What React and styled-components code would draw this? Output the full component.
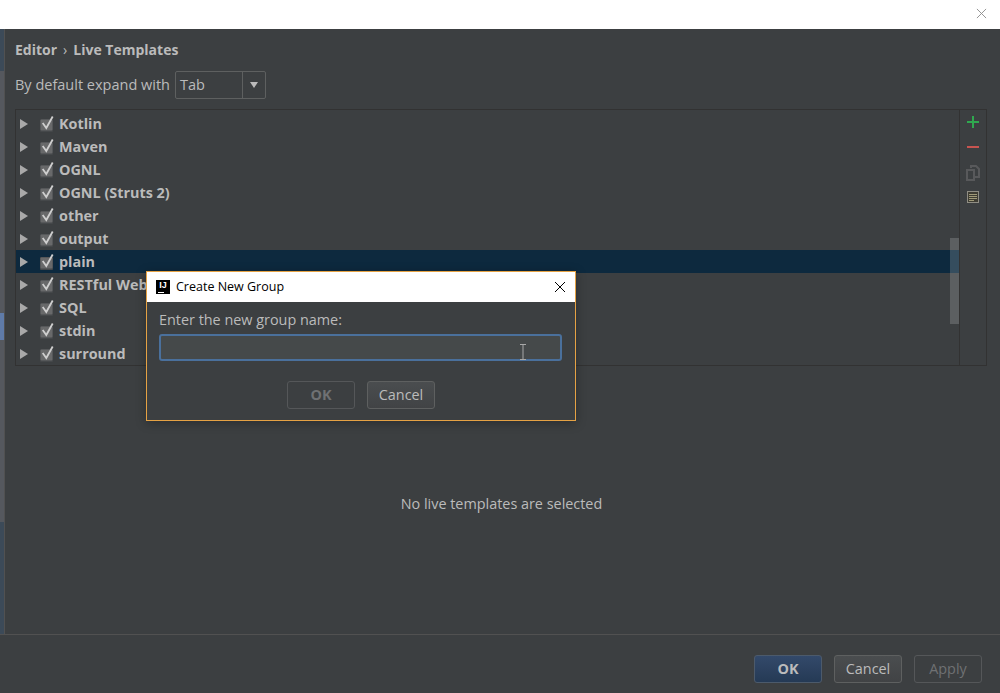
import styled, { createGlobalStyle } from "styled-components";

const groups = [
  "Kotlin",
  "Maven",
  "OGNL",
  "OGNL (Struts 2)",
  "other",
  "output",
  "plain",
  "RESTful Web Services",
  "SQL",
  "stdin",
  "surround",
];

const sideParts = [
  { h: 42, color: "#3c4a58" },
  { h: 242, color: "#55585e" },
  { h: 27, color: "#5f7ba8" },
  { h: 182, color: "#55585e" },
  { h: 112, color: "#3c4a58" },
];

const GlobalStyle = createGlobalStyle`
  html, body {
    margin: 0;
    height: 100%;
    overflow: hidden;
    background: #3c3f41;
  }
  body {
    font-family: "Open Sans", "Noto Sans", sans-serif;
  }
`;

const Page = styled.div`
  position: relative;
  width: 1000px;
  height: 693px;
  display: flex;
  flex-direction: column;
  color: #bbbbbb;
  background: #3c3f41;
`;

const TitleBar = styled.div`
  height: 29px;
  flex: none;
  box-sizing: border-box;
  background: #fff;
  display: flex;
  justify-content: flex-end;
  align-items: center;
  padding: 0 13px 3px 0;
`;

const Body = styled.div`
  flex: 1;
  display: flex;
  min-height: 0;
`;

const Sidebar = styled.div`
  width: 4px;
  flex: none;
  border-right: 1px solid #515151;
  display: flex;
  flex-direction: column;
`;

const SidePart = styled.div`
  height: ${(p) => p.$h}px;
  flex: none;
  background: ${(p) => p.$color};
`;

const Content = styled.div`
  flex: 1;
  padding: 10px 13px 0 10px;
`;

const Crumbs = styled.div`
  height: 21px;
  font-size: 14px;
  font-weight: 700;
  line-height: 21px;
  display: flex;
  gap: 6px;
`;

const CrumbSep = styled.span`
  font-weight: 400;
`;

const ExpandRow = styled.div`
  display: flex;
  align-items: center;
  gap: 5px;
  margin-top: 11px;
  height: 28px;
  font-size: 14.5px;
`;

const ExpandLabel = styled.span`
  padding-bottom: 2px;
`;

const Combo = styled.div`
  width: 91px;
  height: 28px;
  box-sizing: border-box;
  border: 1px solid #5e6060;
  border-radius: 2px;
  display: flex;
  align-items: center;
`;

const ComboValue = styled.div`
  flex: 1;
  padding: 0 0 2px 4px;
`;

const ComboArrow = styled.div`
  width: 22px;
  height: 100%;
  border-left: 1px solid #5e6060;
  display: flex;
  align-items: center;
  justify-content: center;

  &::after {
    content: "";
    border: 4px solid transparent;
    border-top: 6px solid #bbbbbb;
    border-bottom: 0;
  }
`;

const TemplatesPanel = styled.div`
  margin-top: 10px;
  height: 257px;
  box-sizing: border-box;
  border: 1px solid #323232;
  display: flex;
`;

const TreeWrap = styled.div`
  position: relative;
  flex: 1;
  padding-top: 2px;
  border-right: 1px solid #323232;
`;

const TreeRow = styled.div`
  height: 23px;
  display: flex;
  align-items: center;
  background: ${(p) => (p.$selected ? "#0d293e" : "transparent")};
  font-size: 14.4px;
  font-weight: 700;
  white-space: nowrap;
`;

const TreeLabel = styled.span`
  padding-bottom: 1px;
`;

const Arrow = styled.span`
  margin-left: 4px;
  border: 5px solid transparent;
  border-left: 8px solid #a9a9a9;
  border-right: 0;
`;

const Check = styled.svg`
  margin-left: 12px;
  margin-right: 5px;
  flex: none;
`;

const ScrollThumb = styled.div`
  position: absolute;
  top: 128px;
  right: 0;
  width: 9px;
  height: 86px;
  background: rgba(255, 255, 255, 0.17);
`;

const ActionBar = styled.div`
  width: 26px;
  display: flex;
  flex-direction: column;
  align-items: center;
  padding-top: 5px;
  gap: 10px;
`;

const Placeholder = styled.div`
  text-align: center;
  margin-top: 128px;
  padding-left: 1px;
  font-size: 14.4px;
  line-height: 20px;
`;

const Footer = styled.div`
  height: 59px;
  flex: none;
  box-sizing: border-box;
  border-top: 1px solid #515151;
  display: flex;
  justify-content: flex-end;
  align-items: flex-start;
  gap: 12px;
  padding: 20px 18px 0 0;
`;

const Btn = styled.div`
  width: ${(p) => p.$w || 68}px;
  height: 28px;
  box-sizing: border-box;
  padding-bottom: 2px;
  border-radius: 3px;
  font-size: 14.4px;
  display: flex;
  align-items: center;
  justify-content: center;
  border: 1px solid ${(p) => (p.$primary ? "#4c5a6b" : p.$disabled ? "#555759" : "#5e6060")};
  color: ${(p) => (p.$disabled ? "#6f7173" : "#bbbbbb")};
  font-weight: ${(p) => (p.$primary || p.$bold ? 700 : 400)};
  background: ${(p) =>
    p.$primary
      ? "linear-gradient(#33496a, #253a55)"
      : p.$disabled
        ? "transparent"
        : "linear-gradient(#4a4d4f, #414345)"};
`;

const Dialog = styled.div`
  position: absolute;
  left: 146px;
  top: 271px;
  width: 430px;
  height: 150px;
  box-sizing: border-box;
  border: 1px solid #e5a244;
  background: #3c3f41;
  box-shadow: 0 2px 10px rgba(0, 0, 0, 0.3);
  display: flex;
  flex-direction: column;
`;

const DialogTitle = styled.div`
  height: 30px;
  flex: none;
  box-sizing: border-box;
  background: #fff;
  color: #000;
  display: flex;
  align-items: center;
  font-size: 12.5px;
  padding: 0 9px 1px;
  gap: 6px;
`;

const Logo = styled.div`
  width: 14px;
  height: 14px;
  flex: none;
  background: #000;
  color: #fff;
  font: 700 9px/10px "Liberation Sans", sans-serif;
  text-align: center;
  position: relative;

  &::after {
    content: "";
    position: absolute;
    left: 2px;
    bottom: 1px;
    width: 6px;
    height: 1px;
    background: #fff;
  }
`;

const DialogName = styled.div`
  flex: 1;
`;

const DialogBody = styled.div`
  flex: 1;
  padding: 8px 13px 0 12px;
`;

const DialogLabel = styled.div`
  font-size: 14.4px;
  line-height: 20px;
`;

const Input = styled.div`
  position: relative;
  margin-top: 4px;
  height: 27px;
  box-sizing: border-box;
  border: 2px solid #4a709c;
  border-radius: 3px;
  background: #45494a;
`;

const Caret = styled.svg`
  position: absolute;
  right: 33px;
  top: 8px;
`;

const DialogButtons = styled.div`
  display: flex;
  justify-content: flex-end;
  gap: 12px;
  margin-top: 20px;
  padding-right: 127px;
`;

function CloseIcon({ size, color }) {
  return (
    <svg width={size} height={size} viewBox="0 0 12 12">
      <path d="M1 1 L11 11 M11 1 L1 11" stroke={color} strokeWidth="1" fill="none" />
    </svg>
  );
}

function CheckBox() {
  return (
    <Check width="14" height="16" viewBox="0 0 14 16">
      <rect x="0" y="3" width="13" height="13" rx="1" fill="#45484a" />
      <rect x="0.5" y="3.5" width="12" height="11" rx="1" fill="#68696a" />
      <path d="M2.7 7 L6.3 12 L12.7 0.5" stroke="#cfcfcf" strokeWidth="1.8" fill="none" />
    </Check>
  );
}

export default function App() {
  return (
    <Page>
      <GlobalStyle />
      <TitleBar>
        <CloseIcon size={11} color="#8c8c8c" />
      </TitleBar>
      <Body>
        <Sidebar>
          {sideParts.map((part, i) => (
            <SidePart key={i} $h={part.h} $color={part.color} />
          ))}
        </Sidebar>
        <Content>
          <Crumbs>
            <span>Editor</span>
            <CrumbSep>›</CrumbSep>
            <span>Live Templates</span>
          </Crumbs>
          <ExpandRow>
            <ExpandLabel>By default expand with</ExpandLabel>
            <Combo>
              <ComboValue>Tab</ComboValue>
              <ComboArrow />
            </Combo>
          </ExpandRow>
          <TemplatesPanel>
            <TreeWrap>
              {groups.map((name) => (
                <TreeRow key={name} $selected={name === "plain"}>
                  <Arrow />
                  <CheckBox />
                  <TreeLabel>{name}</TreeLabel>
                </TreeRow>
              ))}
              <ScrollThumb />
            </TreeWrap>
            <ActionBar>
              <svg width="14" height="14" viewBox="0 0 14 14">
                <path d="M7 1 V13 M1 7 H13" stroke="#2fa84f" strokeWidth="2" />
              </svg>
              <svg width="14" height="16" viewBox="0 0 14 16">
                <path d="M1 8 H13" stroke="#c75450" strokeWidth="2" />
              </svg>
              <svg width="14" height="16" viewBox="0 0 14 16" fill="none" stroke="#58595b" strokeWidth="2">
                <path d="M5 3 V1 H10 L13 4 V12 H9" />
                <path d="M1 5 H8 V15 H1 Z" />
              </svg>
              <svg width="12" height="12" viewBox="0 0 12 12">
                <rect x="0.5" y="0.5" width="11" height="11" fill="#3f3d33" stroke="#8f8d84" />
                <path d="M2 3.5 H10 M2 5.5 H10 M2 7.5 H10 M2 9.5 H7" stroke="#a09a78" />
              </svg>
            </ActionBar>
          </TemplatesPanel>
          <Placeholder>No live templates are selected</Placeholder>
        </Content>
      </Body>
      <Footer>
        <Btn $primary>OK</Btn>
        <Btn>Cancel</Btn>
        <Btn $disabled>Apply</Btn>
      </Footer>
      <Dialog>
        <DialogTitle>
          <Logo>IJ</Logo>
          <DialogName>Create New Group</DialogName>
          <CloseIcon size={12} color="#000" />
        </DialogTitle>
        <DialogBody>
          <DialogLabel>Enter the new group name:</DialogLabel>
          <Input>
            <Caret width="8" height="16" viewBox="0 0 8 16">
              <path d="M1 0.5 H7 M1 15.5 H7 M4 0.5 V15.5" stroke="#a8a8a8" fill="none" />
            </Caret>
          </Input>
          <DialogButtons>
            <Btn $disabled $bold>OK</Btn>
            <Btn>Cancel</Btn>
          </DialogButtons>
        </DialogBody>
      </Dialog>
    </Page>
  );
}
